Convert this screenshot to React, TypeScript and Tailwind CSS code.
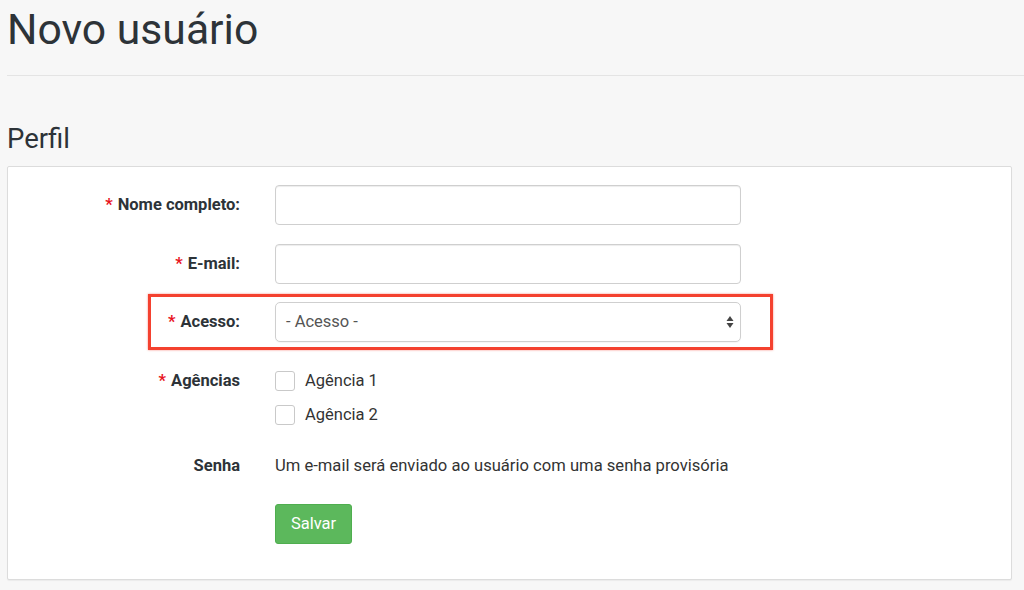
export default function App() {
  return (
    <div className="min-h-[590px] overflow-hidden bg-[#f7f7f7] font-['Roboto',sans-serif] text-[#333]">
      <div className="pl-[7px]">
        <h1 className="pt-[4px] text-[42.7px] leading-[50px] text-[#2d3338]">Novo usuário</h1>
        <hr className="mt-[21px] border-0 border-t border-[#e4e4e4]" />
        <h2 className="mt-[47px] text-[27.5px] leading-[32px] text-[#2d3338]">Perfil</h2>

        <div className="relative mr-[12px] mt-[11px] h-[414px] rounded-[2px] border border-[#dcdcdc] bg-white pt-[18px] shadow-[0_1px_1px_rgba(0,0,0,0.05)]">
          {/* highlight around the Acesso row */}
          <div className="pointer-events-none absolute left-[140px] top-[127px] h-[56px] w-[625px] border-[3px] border-[#f4412f] shadow-[0_0_2px_rgba(244,65,47,0.6)]" />

          <div className="flex items-center">
            <Label required>Nome completo:</Label>
            <input className="ml-[35px] h-[40px] w-[466px] rounded-[4px] border border-[#cfcfcf] bg-white shadow-[inset_0_1px_1px_rgba(0,0,0,0.075)]" />
          </div>

          <div className="mt-[19px] flex items-center">
            <Label required>E-mail:</Label>
            <input className="ml-[35px] h-[40px] w-[466px] rounded-[4px] border border-[#cfcfcf] bg-white shadow-[inset_0_1px_1px_rgba(0,0,0,0.075)]" />
          </div>

          <div className="mt-[18px] flex items-center">
            <Label required>Acesso:</Label>
            <div className="ml-[35px] flex h-[40px] w-[466px] items-center justify-between rounded-[5px] border border-[#cfcfcf] bg-white pl-[10px] pr-[6px] shadow-[0_1px_1px_rgba(0,0,0,0.04)]">
              <span className="text-[16.5px] text-[#555]">- Acesso -</span>
              <svg width="8" height="16" viewBox="0 0 8 16">
                <path d="M4 2 L7.5 7 L0.5 7 Z" fill="#444" />
                <path d="M4 14 L7.5 9 L0.5 9 Z" fill="#444" />
              </svg>
            </div>
          </div>

          <div className="mt-[22px] flex items-start">
            <div className="flex h-[34px] items-center">
              <Label required>Agências</Label>
            </div>
            <div className="ml-[35px] flex flex-col">
              <Check label="Agência 1" />
              <Check label="Agência 2" />
            </div>
          </div>

          <div className="mt-[22px] flex h-[24px] items-center">
            <Label>Senha</Label>
            <span className="ml-[35px] text-[16.6px] text-[#333]">
              Um e-mail será enviado ao usuário com uma senha provisória
            </span>
          </div>

          <div className="ml-[267px] mt-[26px]">
            <button className="h-[40px] w-[77px] rounded-[3px] border border-[#4fae4f] bg-[#5cb85c] text-[16.5px] text-white">
              Salvar
            </button>
          </div>
        </div>
      </div>
    </div>
  );
}

function Label({ children, required }: { children: React.ReactNode; required?: boolean }) {
  return (
    <div className="w-[232px] text-right text-[16.5px] font-bold text-[#2d3338]">
      {required ? <span className="mr-[5px] text-[#e8141e]">*</span> : null}
      {children}
    </div>
  );
}

function Check({ label }: { label: string }) {
  return (
    <label className="flex h-[34px] items-center">
      <span className="h-[20px] w-[20px] rounded-[3px] border border-[#c9c9c9] bg-white" />
      <span className="ml-[10px] text-[16.5px] text-[#333]">{label}</span>
    </label>
  );
}
